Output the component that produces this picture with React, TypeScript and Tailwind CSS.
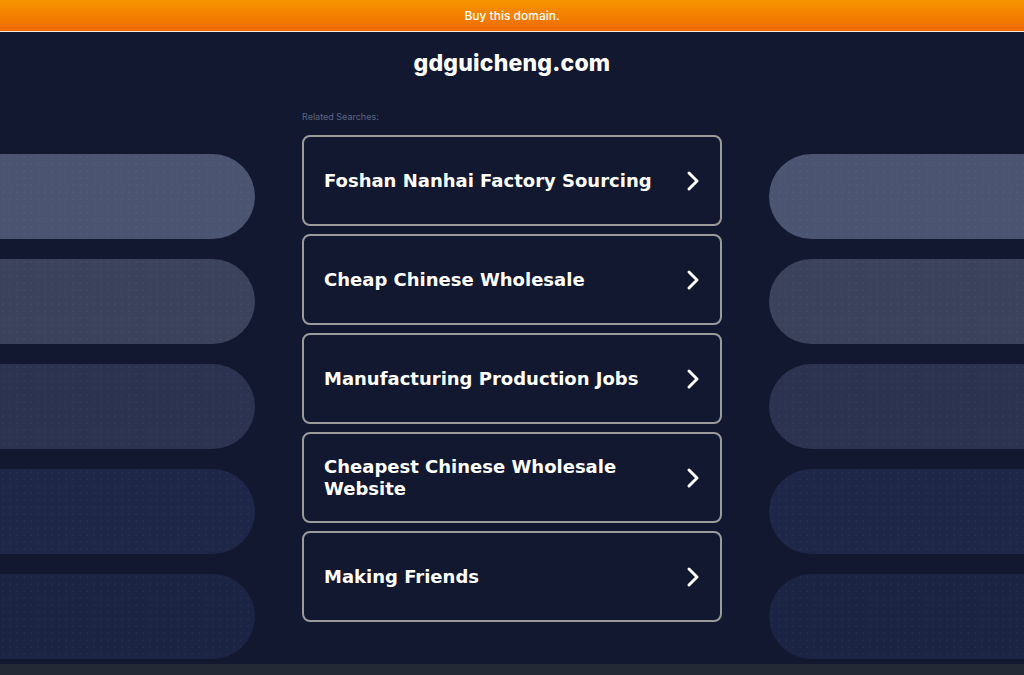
import React from "react";

const items = [
  "Foshan Nanhai Factory Sourcing",
  "Cheap Chinese Wholesale",
  "Manufacturing Production Jobs",
  "Cheapest Chinese Wholesale Website",
  "Making Friends",
];

const pillColors = ["bg-[#4b5571]", "bg-[#3b425c]", "bg-[#2c3351]", "bg-[#1e2748]", "bg-[#1c2444]"];

function Chevron() {
  return (
    <svg width="14" height="22" viewBox="0 0 14 22" className="shrink-0">
      <path d="M3 3 L11 11 L3 19" fill="none" stroke="white" strokeWidth="3" strokeLinecap="round" strokeLinejoin="round" />
    </svg>
  );
}

function Pills({ side }: { side: "left" | "right" }) {
  return (
    <div className="flex flex-col gap-[20px] pt-[60px] w-[255px] shrink-0">
      {pillColors.map((c, i) => (
        <div
          key={i}
          className={`h-[85px] ${c} ${side === "left" ? "rounded-r-[43px]" : "rounded-l-[43px]"} bg-[radial-gradient(rgba(255,255,255,0.035)_1px,transparent_1px)] bg-[length:7px_7px]`}
        />
      ))}
    </div>
  );
}

export default function App() {
  return (
    <div className="h-[675px] w-full bg-[#121830] flex flex-col overflow-hidden font-['Inter',sans-serif]">
      <div className="h-[31px] bg-gradient-to-b from-[#f79400] to-[#ee6a00] flex items-center justify-center shrink-0">
        <span className="text-white text-[12px] font-medium">Buy this domain.</span>
      </div>
      <div className="h-[1px] bg-[#f2e6dc] shrink-0" />
      <div className="h-[62px] flex items-center justify-center shrink-0">
        <span className="text-white text-[23px] font-extrabold tracking-[0.2px]">gdguicheng.com</span>
      </div>
      <div className="flex flex-row flex-1 gap-[47px]">
        <Pills side="left" />
        <div className="w-[420px] shrink-0 flex flex-col">
          <div className="pt-[17px] mb-[12px] text-[9px] leading-[12px] text-[#5c6680]">Related Searches:</div>
          <div className="flex flex-col gap-[8px]">
            {items.map((t) => (
              <div
                key={t}
                className="h-[91px] border-2 border-[#9b9b9b] rounded-[8px] flex items-center justify-between gap-[8px] pl-[20px] pr-[20px]"
              >
                <span className="max-w-[340px] text-white text-[18px] leading-[22px] font-bold font-['DejaVu_Sans',sans-serif]">{t}</span>
                <Chevron />
              </div>
            ))}
          </div>
        </div>
        <Pills side="right" />
      </div>
      <div className="h-[11px] bg-[#232a35] shrink-0" />
    </div>
  );
}
